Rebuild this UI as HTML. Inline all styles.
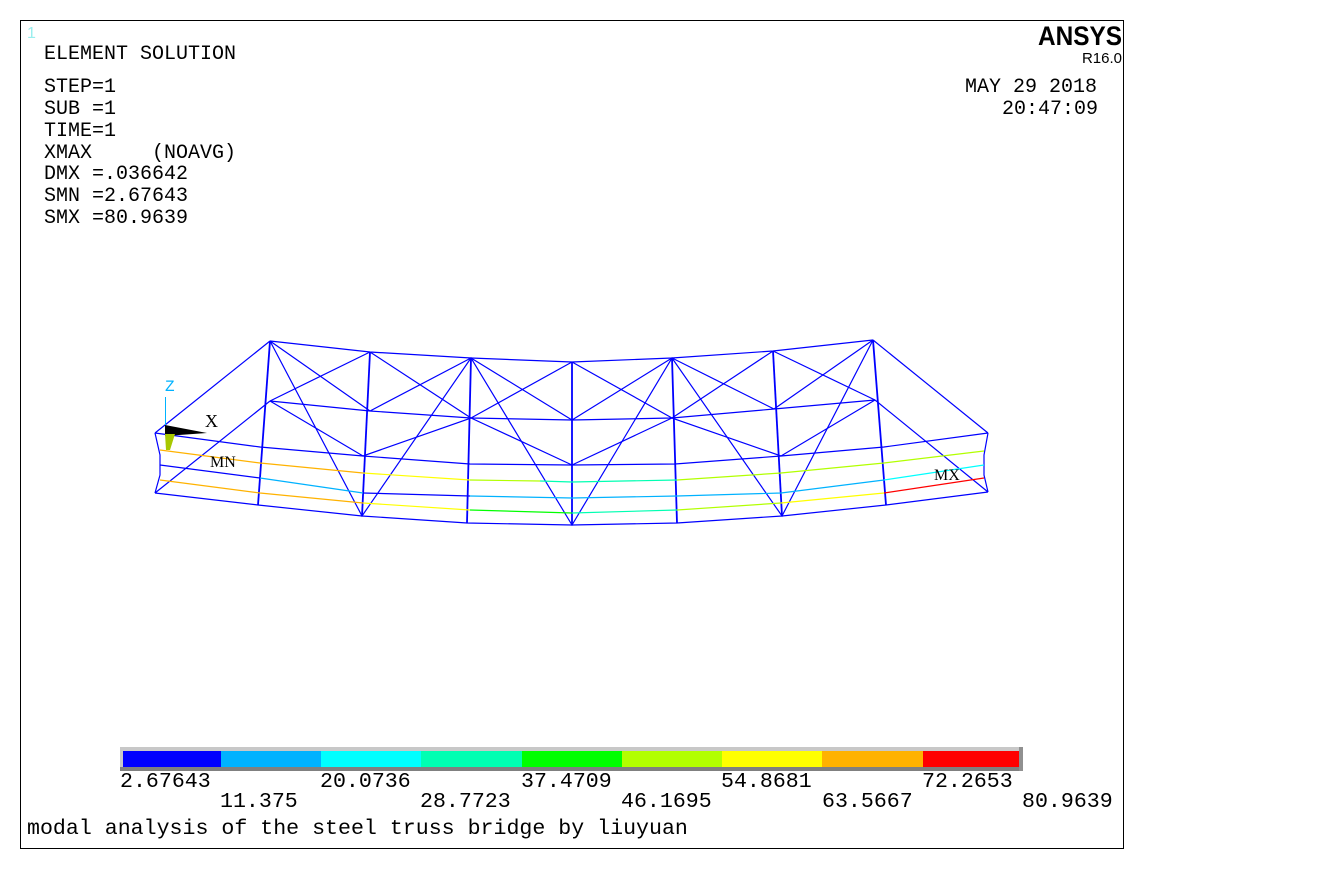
<!DOCTYPE html>
<html><head><meta charset="utf-8"><style>
html,body{margin:0;padding:0;background:#fff;}
svg{display:block;}
.m{font-family:"Liberation Mono",monospace;font-size:20px;fill:#000;}
.l{font-family:"Liberation Mono",monospace;font-size:21.6px;fill:#000;}
</style></head><body>
<svg width="1336" height="869" viewBox="0 0 1336 869" xmlns="http://www.w3.org/2000/svg">
<rect x="0" y="0" width="1336" height="869" fill="#fff"/>
<rect x="20.5" y="20.5" width="1103" height="828" fill="none" stroke="#000" stroke-width="1"/>
<text x="27" y="38" font-family="Liberation Sans,sans-serif" font-size="16" fill="#9ee">1</text>
<g class="m">
<text x="44" y="59">ELEMENT SOLUTION</text>
<text x="44" y="92">STEP=1</text>
<text x="44" y="114">SUB =1</text>
<text x="44" y="136">TIME=1</text>
<text x="44" y="158" xml:space="preserve">XMAX     (NOAVG)</text>
<text x="44" y="179">DMX =.036642</text>
<text x="44" y="201">SMN =2.67643</text>
<text x="44" y="223">SMX =80.9639</text>
<text x="965" y="92">MAY 29 2018</text>
<text x="1002" y="114">20:47:09</text>
</g>
<text x="1122" y="45" text-anchor="end" font-family="Liberation Sans,sans-serif" font-weight="bold" font-size="27" fill="#000" textLength="84" lengthAdjust="spacingAndGlyphs">ANSYS</text>
<text x="1122" y="63" text-anchor="end" font-family="Liberation Sans,sans-serif" font-size="15" fill="#000">R16.0</text>

<g fill="none" stroke="#0000ff" stroke-width="1.2">
<polyline points="270,341 370,352 471,358 572,362 672,358 773,351 873,340"/>
<polyline points="270,401 370,411 471,418 572,420 672,418 774,409 875,400"/>
<polyline points="155,433 260,447 363,456 470,464 572,465 675,464 781,456 884,447 988,433"/>
<polyline points="155,493 258,505 362,516 467,523 572,525 677,523 782,516 886,505 988,492"/>
<polyline points="160,465 260,478"/>
<polyline points="155,433 160,455 160,475 155,493"/>
<polyline points="988,433 984,455 984,475 988,492"/>
<line x1="155" y1="433" x2="270" y2="341"/><line x1="155" y1="493" x2="270" y2="401"/>
<line x1="988" y1="433" x2="873" y2="340"/><line x1="988" y1="492" x2="875" y2="400"/>
<g stroke-width="1.8">
<line x1="270" y1="341" x2="258" y2="505"/><line x1="370" y1="352" x2="362" y2="516"/>
<line x1="471" y1="358" x2="467" y2="523"/><line x1="572" y1="362" x2="572" y2="525"/>
<line x1="672" y1="358" x2="677" y2="523"/><line x1="773" y1="351" x2="782" y2="516"/>
<line x1="873" y1="340" x2="886" y2="505"/>
</g>
<line x1="270" y1="341" x2="370" y2="411"/><line x1="270" y1="401" x2="370" y2="352"/>
<line x1="370" y1="352" x2="471" y2="418"/><line x1="370" y1="411" x2="471" y2="358"/>
<line x1="471" y1="358" x2="572" y2="420"/><line x1="471" y1="418" x2="572" y2="362"/>
<line x1="572" y1="362" x2="672" y2="418"/><line x1="572" y1="420" x2="672" y2="358"/>
<line x1="672" y1="358" x2="774" y2="409"/><line x1="672" y1="418" x2="773" y2="351"/>
<line x1="773" y1="351" x2="875" y2="400"/><line x1="774" y1="409" x2="873" y2="340"/>
<polyline points="270,401 363,456 471,418 572,465 672,418 781,456 875,400"/>
<polyline points="270,341 362,516 471,358 572,525 672,358 782,516 873,340"/>
</g>
<g fill="none" stroke-width="1.2">
<polyline stroke="#ffb200" points="160,450 260,463 363,473"/>
<polyline stroke="#ffff00" points="363,473 470,480"/>
<polyline stroke="#b2ff00" points="470,480 540,481"/>
<polyline stroke="#00ffb2" points="540,481 572,482 677,480"/>
<polyline stroke="#b2ff00" points="677,480 781,473 884,463 984,451"/>
<polyline stroke="#00b2ff" points="260,478 363,493"/>
<polyline stroke="#0000ff" points="363,493 470,496"/>
<polyline stroke="#00b2ff" points="470,496 572,498 677,496 781,493 884,480"/>
<polyline stroke="#00ffff" points="884,480 984,465"/>
<polyline stroke="#ffb200" points="160,480 260,493 363,503"/>
<polyline stroke="#ffff00" points="363,503 470,510"/>
<polyline stroke="#00ff00" points="470,510 572,513"/>
<polyline stroke="#00ffb2" points="572,513 677,510"/>
<polyline stroke="#b2ff00" points="677,510 781,503"/>
<polyline stroke="#ffff00" points="781,503 884,493"/>
<polyline stroke="#ff0000" points="884,493 984,478"/>
</g>
<line x1="165.5" y1="397" x2="165.5" y2="427" stroke="#00b2ff" stroke-width="1"/>
<text x="165" y="391" font-family="Liberation Mono,monospace" font-size="16" fill="#00b2ff">Z</text>
<polygon points="165,425 207,433 165,436" fill="#000"/>
<polygon points="165,434 175,434 170,450 166,450" fill="#a8c800"/>
<text x="205" y="427" font-family="Liberation Serif,serif" font-size="18" fill="#000">X</text>
<text x="210" y="467" font-family="Liberation Serif,serif" font-size="16" fill="#000">MN</text>
<text x="934" y="480" font-family="Liberation Serif,serif" font-size="16" fill="#000">MX</text>

<rect x="120" y="747" width="903" height="24" fill="#c8c8c8"/>
<rect x="120" y="767" width="903" height="4" fill="#808080"/>
<rect x="1019" y="747" width="4" height="24" fill="#909090"/>
<rect x="123" y="751" width="98" height="16" fill="#0000ff"/>
<rect x="221" y="751" width="100" height="16" fill="#00b2ff"/>
<rect x="321" y="751" width="100" height="16" fill="#00ffff"/>
<rect x="421" y="751" width="101" height="16" fill="#00ffb2"/>
<rect x="522" y="751" width="100" height="16" fill="#00ff00"/>
<rect x="622" y="751" width="100" height="16" fill="#b2ff00"/>
<rect x="722" y="751" width="100" height="16" fill="#ffff00"/>
<rect x="822" y="751" width="101" height="16" fill="#ffb200"/>
<rect x="923" y="751" width="96" height="16" fill="#ff0000"/>
<g class="l">
<text x="120" y="787">2.67643</text>
<text x="320" y="787">20.0736</text>
<text x="521" y="787">37.4709</text>
<text x="721" y="787">54.8681</text>
<text x="922" y="787">72.2653</text>
<text x="220" y="807">11.375</text>
<text x="420" y="807">28.7723</text>
<text x="621" y="807">46.1695</text>
<text x="822" y="807">63.5667</text>
<text x="1022" y="807">80.9639</text>
<text x="27" y="834">modal analysis of the steel truss bridge by liuyuan</text>
</g>
</svg>
</body></html>
